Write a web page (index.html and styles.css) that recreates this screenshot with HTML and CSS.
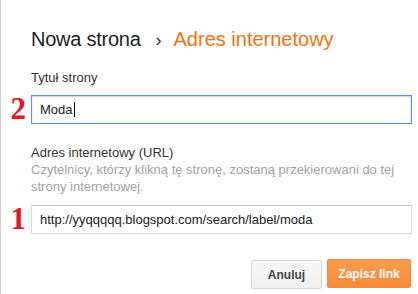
FILE: index.html
```html
<!DOCTYPE html>
<html lang="pl">
<head>
<meta charset="utf-8">
<title>Adres internetowy</title>
<link rel="stylesheet" href="styles.css">
</head>
<body>
<div class="dialog">
  <h1 class="title"><span class="crumb">Nowa strona</span><span class="sep">›</span><span class="current">Adres internetowy</span></h1>

  <div class="label label-first">Tytuł strony</div>
  <div class="field">
    <span class="marker">2</span>
    <div class="input focused">Moda<span class="caret"></span></div>
  </div>

  <div class="label label-second">Adres internetowy (URL)</div>
  <div class="help">Czytelnicy, którzy klikną tę stronę, zostaną przekierowani do tej strony internetowej.</div>
  <div class="field field-url">
    <span class="marker marker-one">1</span>
    <div class="input">http://yyqqqqq.blogspot.com/search/label/moda</div>
  </div>

  <div class="actions">
    <button class="btn btn-cancel">Anuluj</button>
    <button class="btn btn-save">Zapisz link</button>
  </div>
</div>
</body>
</html>
```
FILE: styles.css
```css
html, body {
  margin: 0;
  padding: 0;
  background: #fff;
}

body {
  font-family: "Liberation Sans", Arial, sans-serif;
  width: 418px;
  height: 294px;
  overflow: hidden;
}

.dialog {
  box-sizing: border-box;
  height: 294px;
  border-left: 1px solid #cfcfcf;
  padding: 27px 7px 0 30px;
}

.title {
  margin: 0;
  font-size: 20px;
  font-weight: normal;
  line-height: 24px;
  display: flex;
  align-items: baseline;
  white-space: nowrap;
}

.crumb {
  color: #222;
  letter-spacing: -0.25px;
}

.sep {
  color: #333;
  font-size: 18px;
  margin: 0 12px 0 15px;
}

.current {
  color: #f6720d;
}

.label {
  font-size: 13px;
  line-height: 16px;
  color: #333;
}

.label-first {
  margin-top: 18px;
}

.label-second {
  margin-top: 21px;
}

.help {
  font-size: 13px;
  line-height: 17px;
  color: #a3a3a3;
  margin-top: 0;
}

.field {
  position: relative;
  margin-top: 9px;
}

.field-url {
  margin-top: 10px;
}

.marker {
  position: absolute;
  right: 100%;
  margin-right: 5px;
  top: -4px;
  font-family: "Liberation Serif", "Times New Roman", serif;
  font-weight: bold;
  font-size: 31px;
  line-height: 36px;
  color: #e8151f;
}

.marker-one {
  top: -4px;
}

.input {
  box-sizing: border-box;
  height: 29px;
  width: 381px;
  padding: 0 8px;
  border: 1px solid #d9d9d9;
  border-top-color: #c7c7c7;
  font-size: 13px;
  line-height: 27px;
  color: #222;
  display: flex;
  align-items: center;
  white-space: nowrap;
}

.input.focused {
  border: 1px solid #4d90fe;
  box-shadow: inset 0 1px 2px rgba(0, 0, 0, 0.2);
}

.caret {
  display: inline-block;
  width: 1px;
  height: 15px;
  background: #000;
  margin-left: 1px;
}

.actions {
  display: flex;
  justify-content: flex-end;
  gap: 5px;
  margin-top: 25px;
}

.btn {
  box-sizing: border-box;
  height: 29px;
  font-family: "Liberation Sans", Arial, sans-serif;
  font-size: 12px;
  font-weight: bold;
  border-radius: 2px;
  padding: 0;
  cursor: pointer;
}

.btn-cancel {
  width: 71px;
  margin-top: 1px;
  color: #444;
  background: linear-gradient(#f6f6f6, #f0f0f0);
  border: 1px solid #d8d8d8;
}

.btn-save {
  width: 84px;
  color: #fff;
  background: linear-gradient(#fc9c4f, #f88a36);
  border: 1px solid #f48a3c;
}
```
